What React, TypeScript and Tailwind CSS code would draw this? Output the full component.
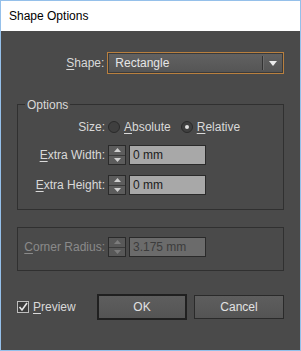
import React from "react";

const font = { fontFamily: '"Liberation Sans", Arial, sans-serif' };

function Spinner({ disabled = false }: { disabled?: boolean }) {
  const tri = disabled ? "#7c7c7c" : "#cfcfcf";
  return (
    <div
      className={`flex h-[20px] w-[18px] flex-col border border-[#2a2a2a] ${
        disabled ? "bg-[#585858]" : "bg-[#5c5c5c]"
      }`}
    >
      <div className="flex flex-1 items-center justify-center border-b border-[#3a3a3a]">
        <svg width="7" height="4" viewBox="0 0 7 4">
          <path d="M0 4 L3.5 0 L7 4 Z" fill={tri} />
        </svg>
      </div>
      <div className="flex flex-1 items-center justify-center">
        <svg width="7" height="4" viewBox="0 0 7 4">
          <path d="M0 0 L3.5 4 L7 0 Z" fill={tri} />
        </svg>
      </div>
    </div>
  );
}

function Field({
  ul,
  rest,
  value,
  disabled = false,
}: {
  ul: string;
  rest: string;
  value: string;
  disabled?: boolean;
}) {
  return (
    <div className="flex h-[20px] items-center gap-[3px]">
      <div
        className={`w-[87px] text-right ${disabled ? "text-[#8a8a8a]" : "text-[#d9d9d9]"}`}
      >
        <span className="underline underline-offset-2">{ul}</span>
        {rest}
      </div>
      <Spinner disabled={disabled} />
      <div
        className={`flex h-[20px] w-[77px] items-center border border-[#2a2a2a] pl-[3px] ${
          disabled ? "bg-[#6b6b6b] text-[#3c3c3c]" : "bg-[#a8a8a8] text-[#1c1c1c]"
        }`}
      >
        {value}
      </div>
    </div>
  );
}

function Radio({ checked }: { checked?: boolean }) {
  return (
    <div className="flex h-[12px] w-[12px] items-center justify-center rounded-full border border-[#2a2a2a] bg-[#3f3f3f]">
      {checked && <div className="h-[4px] w-[4px] rounded-full bg-[#e0e0e0]" />}
    </div>
  );
}

export default function App() {
  return (
    <div
      className="flex h-[351px] w-[301px] flex-col border border-[#95c0ea] text-[12px]"
      style={font}
    >
      <div className="flex h-[30px] items-center bg-white pl-[8px] text-[12px] text-black">
        Shape Options
      </div>
      <div className="flex flex-1 flex-col bg-[#4a4a4a] px-[16px]">
        {/* Shape row */}
        <div className="mt-[21px] flex h-[22px] items-center gap-[3px]">
          <div className="w-[88px] text-right text-[#d9d9d9]">
            <span className="underline underline-offset-2">S</span>hape:
          </div>
          <div className="flex h-[22px] w-[178px] items-center border border-[#b9803f] bg-[#3a3a3a] p-[1px]">
            <div className="flex h-full w-full items-center bg-gradient-to-b from-[#616161] to-[#555555]">
              <div className="flex-1 pl-[6px] text-[#e6e6e6]">Rectangle</div>
              <div className="h-[14px] w-[2px] border-l border-[#333] bg-[#6c6c6c]" />
              <div className="flex w-[18px] items-center justify-center">
                <svg width="8" height="5" viewBox="0 0 8 5">
                  <path d="M0 0 L8 0 L4 5 Z" fill="#ececec" />
                </svg>
              </div>
            </div>
          </div>
        </div>

        {/* Options group */}
        <div className="relative mt-[30px] flex flex-col border border-[#303030] pb-[14px] pt-[14px]">
          <span className="absolute -top-[9px] left-[7px] bg-[#4a4a4a] px-[2px] text-[#d9d9d9]">
            Options
          </span>
          <div className="flex h-[16px] items-center">
            <div className="w-[87px] text-right text-[#d9d9d9]">Size:</div>
            <div className="ml-[3px] flex items-center gap-[4px] text-[#d9d9d9]">
              <Radio />
              <span>
                <span className="underline underline-offset-2">A</span>bsolute
              </span>
            </div>
            <div className="ml-[10px] flex items-center gap-[4px] text-[#d9d9d9]">
              <Radio checked />
              <span>
                <span className="underline underline-offset-2">R</span>elative
              </span>
            </div>
          </div>
          <div className="mt-[10px]">
            <Field ul="E" rest="xtra Width:" value="0 mm" />
          </div>
          <div className="mt-[10px]">
            <Field ul="E" rest="xtra Height:" value="0 mm" />
          </div>
        </div>

        {/* Corner group */}
        <div className="mt-[17px] flex flex-col border border-[#303030] pb-[13px] pt-[9px]">
          <Field ul="C" rest="orner Radius:" value="3.175 mm" disabled />
        </div>

        {/* Bottom row */}
        <div className="mt-[23px] flex h-[26px] items-center">
          <div className="flex items-center gap-[4px] text-[#d9d9d9]">
            <div className="flex h-[12px] w-[12px] items-center justify-center border border-[#bdbdbd] bg-[#3c3c3c]">
              <svg width="10" height="10" viewBox="0 0 10 10">
                <path d="M1.5 5 L4 8 L9 1" stroke="#e6e6e6" strokeWidth="1.6" fill="none" />
              </svg>
            </div>
            <span>
              <span className="underline underline-offset-2">P</span>review
            </span>
          </div>
          <button className="ml-auto flex h-[26px] w-[90px] items-center justify-center border-2 border-[#202020] bg-gradient-to-b from-[#5e5e5e] to-[#545454] text-[#e2e2e2]">
            OK
          </button>
          <button className="ml-[7px] flex h-[24px] w-[90px] items-center justify-center border border-[#2a2a2a] bg-gradient-to-b from-[#5e5e5e] to-[#545454] text-[#e2e2e2]">
            Cancel
          </button>
        </div>
      </div>
    </div>
  );
}
